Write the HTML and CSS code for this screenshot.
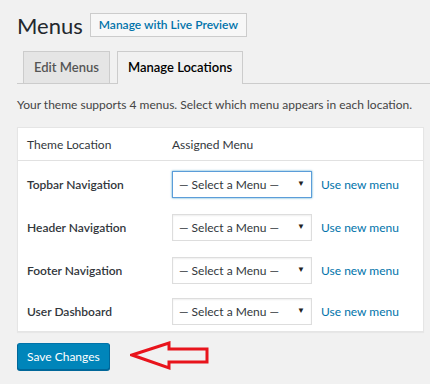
FILE: index.html
```html
<!DOCTYPE html>
<html lang="en">
  <head>
    <meta charset="UTF-8" />
    <title>Menus</title>
    <link rel="stylesheet" href="styles.css">
  </head>
  <body>
    <div class="wrap">
      <div class="title-row">
        <h1>Menus</h1>
        <a class="page-action" href="#">Manage with Live Preview</a>
      </div>

      <div class="nav-tabs">
        <a class="nav-tab" href="#">Edit Menus</a>
        <a class="nav-tab active" href="#">Manage Locations</a>
      </div>

      <p class="intro">Your theme supports 4 menus. Select which menu appears in each location.</p>

      <div class="locations">
        <div class="loc-head">
          <span class="col-loc">Theme Location</span>
          <span>Assigned Menu</span>
        </div>
        <div class="loc-row first">
          <span class="col-loc">Topbar Navigation</span>
          <div class="select focus"><span>— Select a Menu —</span><span class="caret">▼</span></div>
          <a class="new-menu" href="#">Use new menu</a>
        </div>
        <div class="loc-row">
          <span class="col-loc">Header Navigation</span>
          <div class="select"><span>— Select a Menu —</span><span class="caret">▼</span></div>
          <a class="new-menu" href="#">Use new menu</a>
        </div>
        <div class="loc-row">
          <span class="col-loc">Footer Navigation</span>
          <div class="select"><span>— Select a Menu —</span><span class="caret">▼</span></div>
          <a class="new-menu" href="#">Use new menu</a>
        </div>
        <div class="loc-row last">
          <span class="col-loc">User Dashboard</span>
          <div class="select"><span>— Select a Menu —</span><span class="caret">▼</span></div>
          <a class="new-menu" href="#">Use new menu</a>
        </div>
      </div>

      <div class="save-row">
        <button type="button" class="save-btn">Save Changes</button>
        <svg class="arrow" width="80" height="30" viewBox="0 0 80 30">
          <polygon points="2,14 39,2 39,8 77,8 77,21 39,21 39,27" fill="none" stroke="#e8141c" stroke-width="3" stroke-linejoin="miter"/>
        </svg>
      </div>
    </div>
    <div class="footer-strip"></div>
  </body>
</html>
```

FILE: styles.css
```css
body {
  margin: 0;
  background-color: #f1f1f1;
  font-family: Lato, "Open Sans", Arial, sans-serif;
  font-size: 12px;
  color: #444444;
  overflow: hidden;
}

a {
  text-decoration: none;
  color: #0073aa;
}

.wrap {
  padding: 9px 6px 0 17px;
}

.title-row {
  display: flex;
  align-items: center;
  gap: 7px;
  height: 32px;
}

h1 {
  margin: 0;
  font-size: 22px;
  font-weight: 400;
  color: #23282d;
}

.page-action {
  display: block;
  padding: 0 8px;
  height: 22px;
  line-height: 22px;
  border: 1px solid #cccccc;
  background-color: #f7f7f7;
  font-size: 12px;
  font-weight: 600;
}

.nav-tabs {
  display: flex;
  gap: 7px;
  margin: 10px -6px 0 0;
  padding-left: 6px;
  border-bottom: 1px solid #cccccc;
  height: 32px;
}

.nav-tab {
  display: block;
  padding: 0 10px;
  height: 31px;
  line-height: 31px;
  border: 1px solid #cccccc;
  border-bottom: none;
  background-color: #e5e5e5;
  color: #555555;
  font-size: 13px;
  font-weight: 600;
}

.nav-tab.active {
  background-color: #f1f1f1;
  color: #000000;
  height: 32px;
}

.intro {
  margin: 12px 0 0;
  line-height: 17px;
  color: #444444;
}

.locations {
  margin-top: 14px;
  background-color: #ffffff;
  border: 1px solid #e5e5e5;
  box-shadow: 0 1px 1px rgba(0, 0, 0, 0.04);
}

.loc-head {
  display: flex;
  align-items: center;
  height: 32px;
  padding-left: 9px;
  border-bottom: 1px solid #e1e1e1;
  color: #32373c;
}

.col-loc {
  width: 145px;
}

.loc-row {
  display: flex;
  align-items: center;
  height: 43px;
  padding-left: 9px;
  color: #23282d;
}

.loc-row.first {
  margin-top: 2px;
}

.loc-row.last {
  height: 39px;
}

.loc-row .col-loc {
  font-weight: 600;
  color: #32373c;
}

.select {
  display: flex;
  align-items: center;
  justify-content: space-between;
  box-sizing: border-box;
  width: 140px;
  height: 27px;
  padding: 0 6px;
  border: 1px solid #dddddd;
  box-shadow: inset 0 1px 2px rgba(0, 0, 0, 0.07);
  color: #32373c;
  margin-right: 9px;
}

.select.focus {
  border-color: #5b9dd9;
  box-shadow: 0 0 2px rgba(30, 140, 190, 0.8);
}

.caret {
  font-size: 8px;
  color: #222222;
  margin-top: -4px;
}

.save-row {
  display: flex;
  align-items: center;
  gap: 20px;
  margin-top: 9px;
}

.save-btn {
  height: 27px;
  padding: 0 9px;
  background-color: #0085ba;
  border: 1px solid #0073aa;
  border-color: #0073aa #006799 #006799;
  border-radius: 3px;
  box-shadow: 0 1px 0 #006799;
  color: #ffffff;
  font-family: Lato, "Open Sans", Arial, sans-serif;
  font-size: 12px;
}

.footer-strip {
  margin: 13px 0 0 11px;
  height: 10px;
  background-color: #ffffff;
}
```
